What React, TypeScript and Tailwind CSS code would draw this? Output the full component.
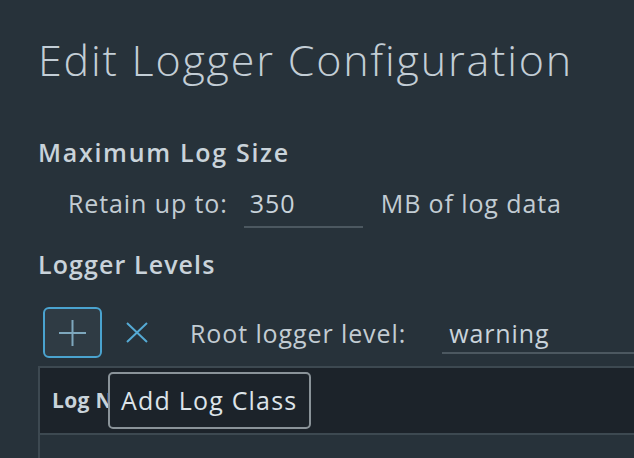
import React from "react";

export default function App() {
  return (
    <div
      className="w-[634px] h-[458px] overflow-hidden bg-[#27323a] text-[#c9d3da]"
      style={{ fontFamily: "'Open Sans', Lato, sans-serif" }}
    >
      <div className="pl-[38px] pt-[32px]">
        <h1 className="text-[43px] leading-[56px] font-light tracking-[1.8px] text-[#c3ced6]">
          Edit Logger Configuration
        </h1>

        <h2 className="mt-[49px] text-[25px] leading-[30px] font-semibold tracking-[1.7px] text-[#c9d3da]">
          Maximum Log Size
        </h2>

        <div className="mt-[21px] flex items-start pl-[30px] text-[25px] leading-[30px] tracking-[0.9px]">
          <span className="text-[#c2ccd3]">Retain up to:</span>
          <div className="ml-[16px] w-[119px] border-b-2 border-[#4c5860] pb-[8px] pl-[6px] text-[#c9d3da]">
            350
          </div>
          <span className="ml-[18px] text-[#c2ccd3]">MB of log data</span>
        </div>

        <h2 className="mt-[21px] text-[25px] leading-[30px] font-semibold tracking-[1.1px] text-[#c9d3da]">
          Logger Levels
        </h2>

        <div className="mt-[28px] flex items-start">
          <button className="ml-[5px] flex h-[51px] w-[59px] items-center justify-center rounded-[6px] border-2 border-[#4aa3cf] bg-[#2f3b44]">
            <svg width="27" height="26" viewBox="0 0 27 26" fill="none">
              <path d="M13.5 0v26M0 13h27" stroke="#7ea7bd" strokeWidth="2" />
            </svg>
          </button>
          <button className="ml-[24px] mt-[15px] flex h-[21px] w-[22px] items-center justify-center">
            <svg width="22" height="21" viewBox="0 0 22 21" fill="none">
              <path d="M1 1l20 19M21 1L1 20" stroke="#55aad4" strokeWidth="2" />
            </svg>
          </button>
          <span className="ml-[42px] mt-[11px] text-[25px] leading-[30px] tracking-[0.9px] text-[#c2ccd3]">
            Root logger level:
          </span>
          <div className="ml-[36px] mt-[11px] flex-1 border-b-2 border-[#4c5860] pb-[4px] pl-[7px] text-[25px] leading-[30px] tracking-[0.9px] text-[#c9d3da]">
            warning
          </div>
        </div>

        <div className="relative mt-[8px] w-[700px] border-l-2 border-t-2 border-[#3d4951]">
          <div className="flex h-[67px] items-center border-b-2 border-[#3d4951] bg-[#1c232a] pl-[12px]">
            <span className="w-[56px] overflow-hidden whitespace-nowrap text-[21px] font-bold tracking-[0.3px] text-[#c9d3da]">
              Log Name
            </span>
          </div>
          <div className="h-[40px] bg-[#27323a]" />
          <div className="absolute left-[68px] top-[4px] flex h-[57px] w-[203px] items-center rounded-[5px] border-2 border-[#8a9399] bg-[#1c232a] pl-[11px] text-[25px] tracking-[1.2px] text-[#dde4e9]">
            Add Log Class
          </div>
        </div>
      </div>
    </div>
  );
}
